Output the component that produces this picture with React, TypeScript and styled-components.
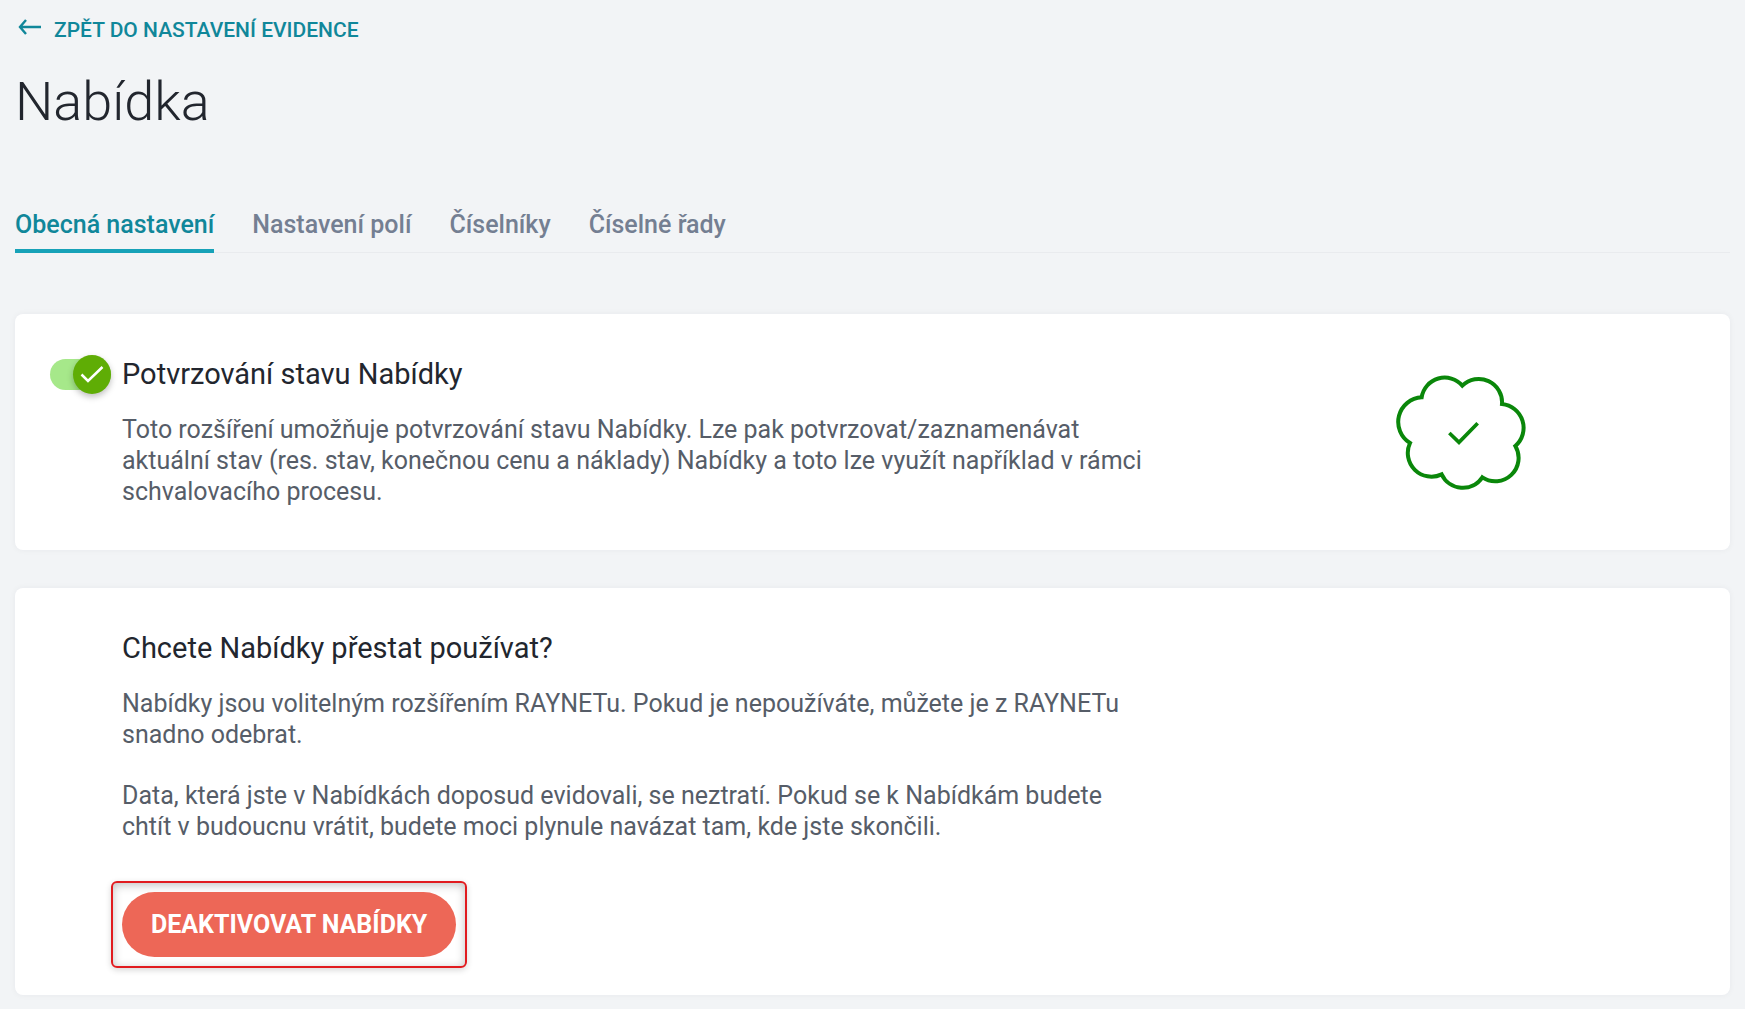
import React, { useState } from "react";
import styled, { createGlobalStyle } from "styled-components";

const GlobalStyle = createGlobalStyle`
  *, *::before, *::after { box-sizing: border-box; }
  body {
    margin: 0;
    background: #f2f4f6;
    font-family: Roboto, "Liberation Sans", sans-serif;
    color: #22262e;
  }
  h1, h2, p { margin: 0; }
`;

const Page = styled.main`
  padding: 14px 15px;
`;

const BackLink = styled.a`
  display: inline-flex;
  align-items: center;
  gap: 11px;
  padding-left: 3px;
  font-size: 21px;
  line-height: 32px;
  font-weight: 500;
  color: #10879a;
  text-decoration: none;
  text-transform: uppercase;
`;

const BackArrow = styled.svg`
  width: 25px;
  height: 16px;
  margin-bottom: 6px;
`;

const PageTitle = styled.h1`
  margin-top: 24px;
  font-size: 54px;
  line-height: 64px;
  font-weight: 300;
`;

const Tabs = styled.nav`
  display: flex;
  gap: 38px;
  margin-top: 68px;
  box-shadow: inset 0 -1px #e9ebee;
`;

const Tab = styled.a<{ $active?: boolean }>`
  padding: 3px 0 5px;
  border-bottom: 4px solid ${(p) => (p.$active ? "#17a2b8" : "transparent")};
  font-size: 25px;
  line-height: 39px;
  font-weight: 500;
  color: ${(p) => (p.$active ? "#10879a" : "#747f92")};
  text-decoration: none;
`;

const Cards = styled.div`
  display: grid;
  gap: 38px;
  margin-top: 61px;
`;

const Card = styled.section`
  display: grid;
  grid-template-columns: 62px minmax(0, 1026px) minmax(164px, 1fr);
  column-gap: 10px;
  padding: 38px 0 38px 35px;
  border-radius: 8px;
  background: #fff;
  box-shadow: 0 0 6px rgba(30, 40, 60, 0.05);
`;

const CardBody = styled.div`
  grid-column: 2;
`;

const CardTitle = styled.h2`
  font-size: 29px;
  line-height: 44px;
  font-weight: 400;
`;

const CardText = styled.p`
  margin-top: 18px;
  font-size: 25px;
  line-height: 31px;
  color: #565d68;

  & + & { margin-top: 30px; }
`;

const Illustration = styled.div`
  display: grid;
  place-items: center;
  padding: 22px 0 22px 32px;
`;

const Badge = styled.svg`
  width: 132px;
  height: 116px;
  overflow: visible;
`;

const Switch = styled.label`
  position: relative;
  display: flex;
  align-items: center;
  align-self: start;
  height: 44px;
  cursor: pointer;
`;

const SwitchInput = styled.input`
  position: absolute;
  inset: 0;
  width: 100%;
  height: 100%;
  margin: 0;
  opacity: 0;
  cursor: pointer;
`;

const Track = styled.span<{ $on: boolean }>`
  display: flex;
  align-items: center;
  justify-content: ${(p) => (p.$on ? "flex-end" : "flex-start")};
  width: 61px;
  height: 31px;
  border-radius: 16px;
  background: ${(p) => (p.$on ? "#a6e88a" : "#cfd4da")};
`;

const Knob = styled.span<{ $on: boolean }>`
  display: grid;
  place-items: center;
  width: 38px;
  height: 39px;
  border-radius: 50%;
  background: ${(p) => (p.$on ? "#5fad05" : "#fff")};
  box-shadow: 0 3px 6px rgba(0, 0, 0, 0.25);
`;

const Highlight = styled.div`
  position: relative;
  width: fit-content;
  margin-top: 50px;

  &::before {
    content: "";
    position: absolute;
    inset: -11px;
    border: 2px solid #e11b1f;
    border-radius: 6px;
    box-shadow: 0 2px 6px rgba(0, 0, 0, 0.16), inset 0 2px 10px rgba(0, 0, 0, 0.25);
    pointer-events: none;
  }
`;

const DangerButton = styled.button`
  position: relative;
  display: block;
  padding: 0 29px;
  border: 0;
  border-radius: 33px;
  background: #ed6757;
  color: #fff;
  font-family: inherit;
  font-size: 25px;
  line-height: 65px;
  font-weight: 700;
  text-transform: uppercase;
  cursor: pointer;
`;

const tabs = ["Obecná nastavení", "Nastavení polí", "Číselníky", "Číselné řady"];

export default function App() {
  const [confirming, setConfirming] = useState(true);

  return (
    <>
      <GlobalStyle />
      <Page>
        <BackLink href="#evidence">
          <BackArrow viewBox="0 0 25 16" fill="none" stroke="currentColor" strokeWidth="2.4" aria-hidden="true">
            <path d="M8 1L2 8l6 7M2 8h21" />
          </BackArrow>
          Zpět do nastavení evidence
        </BackLink>
        <PageTitle>Nabídka</PageTitle>
        <Tabs>
          {tabs.map((tab, i) => (
            <Tab key={tab} href={`#tab-${i}`} $active={i === 0} aria-current={i === 0 ? "page" : undefined}>
              {tab}
            </Tab>
          ))}
        </Tabs>
        <Cards>
          <Card>
            <Switch htmlFor="confirming">
              <SwitchInput
                id="confirming"
                type="checkbox"
                aria-labelledby="confirming-title"
                checked={confirming}
                onChange={(e) => setConfirming(e.target.checked)}
              />
              <Track $on={confirming}>
                <Knob $on={confirming}>
                  {confirming && (
                    <svg width="24" height="20" viewBox="0 0 24 20" fill="none" stroke="#fff" strokeWidth="2.5" aria-hidden="true">
                      <path d="M1.5 10.5l6.5 6.5L22.5 3" />
                    </svg>
                  )}
                </Knob>
              </Track>
            </Switch>
            <CardBody>
              <CardTitle id="confirming-title">Potvrzování stavu Nabídky</CardTitle>
              <CardText>
                Toto rozšíření umožňuje potvrzování stavu Nabídky. Lze pak potvrzovat/zaznamenávat aktuální stav (res.
                stav, konečnou cenu a náklady) Nabídky a toto lze využít například v rámci schvalovacího procesu.
              </CardText>
            </CardBody>
            <Illustration>
              <Badge viewBox="42 42 396 348" fill="none" stroke="#0a870a" aria-hidden="true">
                <path
                  strokeWidth="12"
                  d="M247 77A70 70 0 0 1 366 132A72 72 0 0 1 406 258A70 70 0 0 1 307 352A70 70 0 0 1 185 343A71 71 0 0 1 90 249A74 74 0 0 1 125 112A70 70 0 0 1 247 77Z"
                />
                <path strokeWidth="11" d="M208 219L237 247L293 190" />
              </Badge>
            </Illustration>
          </Card>
          <Card>
            <CardBody>
              <CardTitle>Chcete Nabídky přestat používat?</CardTitle>
              <CardText>
                Nabídky jsou volitelným rozšířením RAYNETu. Pokud je nepoužíváte, můžete je z RAYNETu snadno odebrat.
              </CardText>
              <CardText>
                Data, která jste v Nabídkách doposud evidovali, se neztratí. Pokud se k Nabídkám budete chtít v
                budoucnu vrátit, budete moci plynule navázat tam, kde jste skončili.
              </CardText>
              <Highlight>
                <DangerButton type="button">Deaktivovat Nabídky</DangerButton>
              </Highlight>
            </CardBody>
          </Card>
        </Cards>
      </Page>
    </>
  );
}
